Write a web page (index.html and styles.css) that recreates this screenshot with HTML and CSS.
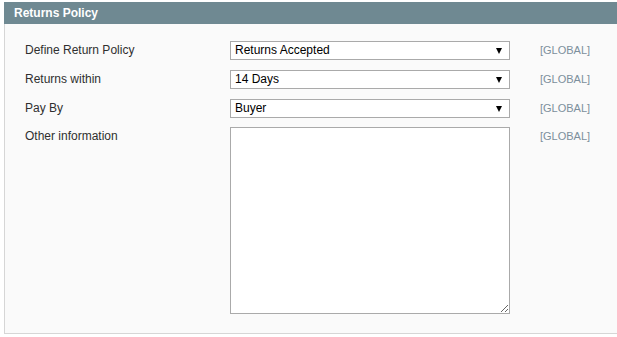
FILE: index.html
```html
<!DOCTYPE html>
<html lang="en">
<head>
  <meta charset="UTF-8" />
  <meta name="viewport" content="width=device-width, initial-scale=1.0" />
  <title>Returns Policy</title>
  <link rel="stylesheet" href="styles.css">
</head>
<body>

  <div class="section">
    <div class="section-head">Returns Policy</div>

    <div class="section-body">
      <div class="form-row">
        <label for="return-policy">Define Return Policy</label>
        <div class="select-wrap">
          <select id="return-policy">
            <option>Returns Accepted</option>
            <option>No Returns Accepted</option>
          </select>
        </div>
        <span class="scope">[GLOBAL]</span>
      </div>

      <div class="form-row">
        <label for="returns-within">Returns within</label>
        <div class="select-wrap">
          <select id="returns-within">
            <option>14 Days</option>
            <option>30 Days</option>
            <option>60 Days</option>
          </select>
        </div>
        <span class="scope">[GLOBAL]</span>
      </div>

      <div class="form-row">
        <label for="pay-by">Pay By</label>
        <div class="select-wrap">
          <select id="pay-by">
            <option>Buyer</option>
            <option>Seller</option>
          </select>
        </div>
        <span class="scope">[GLOBAL]</span>
      </div>

      <div class="form-row form-row-text">
        <label for="other-info">Other information</label>
        <textarea id="other-info"></textarea>
        <span class="scope">[GLOBAL]</span>
      </div>
    </div>
  </div>

</body>
</html>
```

FILE: styles.css
```css
* {
  box-sizing: border-box;
}

body {
  margin: 0;
  padding: 2px 0 0 4px;
  background: #fff;
  font-family: Arial, "Liberation Sans", sans-serif;
  font-size: 12px;
  color: #2f2f2f;
}

.section {
  width: 100%;
}

.section-head {
  height: 22px;
  background: #6f8992;
  color: #fff;
  font-weight: bold;
  font-size: 12px;
  line-height: 22px;
  padding-left: 10px;
}

.section-body {
  background: #fafafa;
  border-left: 1px solid #d6d6d6;
  border-bottom: 1px solid #d6d6d6;
  padding: 17px 0 19px 20px;
  display: flex;
  flex-direction: column;
  gap: 10px;
}

.form-row {
  display: grid;
  grid-template-columns: 175px 280px auto;
  column-gap: 30px;
  align-items: start;
}

.form-row-text {
  margin-top: -1px;
}

.form-row label {
  line-height: 19px;
}

.select-wrap {
  position: relative;
  height: 19px;
}

.select-wrap::after {
  content: "";
  position: absolute;
  right: 8px;
  top: 7px;
  border-left: 3.5px solid transparent;
  border-right: 3.5px solid transparent;
  border-top: 6px solid #000;
  pointer-events: none;
}

select {
  -webkit-appearance: none;
  appearance: none;
  width: 100%;
  height: 19px;
  margin: 0;
  padding: 0 20px 0 4px;
  border: 1px solid #aaa;
  border-radius: 0;
  background: #fff;
  font-family: inherit;
  font-size: 12px;
  color: #000;
  line-height: 17px;
}

textarea {
  width: 280px;
  height: 187px;
  margin: 0;
  border: 1px solid #aaa;
  border-radius: 0;
  background: #fff;
  font-family: inherit;
  font-size: 12px;
}

.scope {
  color: #7c8f9c;
  font-size: 11px;
  line-height: 19px;
}
```
